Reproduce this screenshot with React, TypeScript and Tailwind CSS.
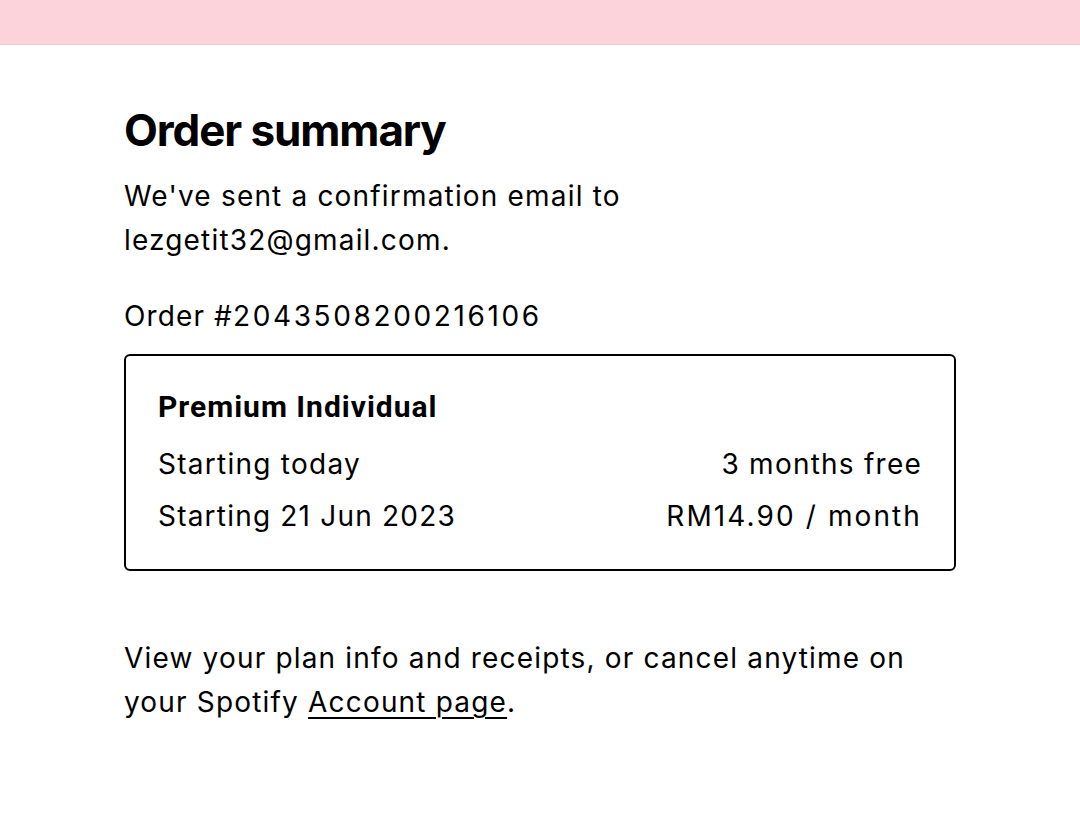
const order = {
  email: "lezgetit32@gmail.com",
  number: "2043508200216106",
  plan: "Premium Individual",
  today: "3 months free",
  renewDate: "21 Jun 2023",
  price: "RM14.90 / month",
};

export default function App() {
  return (
    <div className="min-h-screen bg-white text-black font-['Inter','Liberation_Sans',sans-serif]">
      <header className="h-[45px] bg-[#fcd2db] border-b border-[#f3c6cf]" />

      <main className="mx-auto w-[832px] pt-[59px]">
        <h1 className="text-[44px] leading-[52px] font-bold tracking-[-0.025em]">Order summary</h1>

        <p className="mt-[18px] w-[560px] text-[28px] leading-[44px] tracking-[0.042em]">
          We've sent a confirmation email to {order.email}.
        </p>

        <p className="mt-[32px] text-[28px] leading-[44px] tracking-[0.04em]">
          Order #<span className="tracking-[0.094em]">{order.number}</span>
        </p>

        <section className="mt-[16px] rounded-[6px] border-2 border-black px-[32px] pt-[33px] pb-[33px]">
          <h2 className="font-['Roboto',sans-serif] text-[30px] leading-[36px] font-bold tracking-[0.033em]">
            {order.plan}
          </h2>
          <div className="mt-[19px] text-[28px] leading-[40px]">
            <div className="flex justify-between">
              <span className="tracking-[0.045em]">Starting today</span>
              <span className="tracking-[0.044em]">{order.today}</span>
            </div>
            <div className="mt-[12px] flex justify-between">
              <span className="tracking-[0.043em]">Starting {order.renewDate}</span>
              <span className="tracking-[0.075em]">{order.price}</span>
            </div>
          </div>
        </section>

        <p className="mt-[65px] text-[28px] leading-[44px] tracking-[0.042em]">
          View your plan info and receipts, or cancel anytime on your Spotify{" "}
          <a href="#" className="underline decoration-2 underline-offset-[5px]">Account page</a>.
        </p>
      </main>
    </div>
  );
}
